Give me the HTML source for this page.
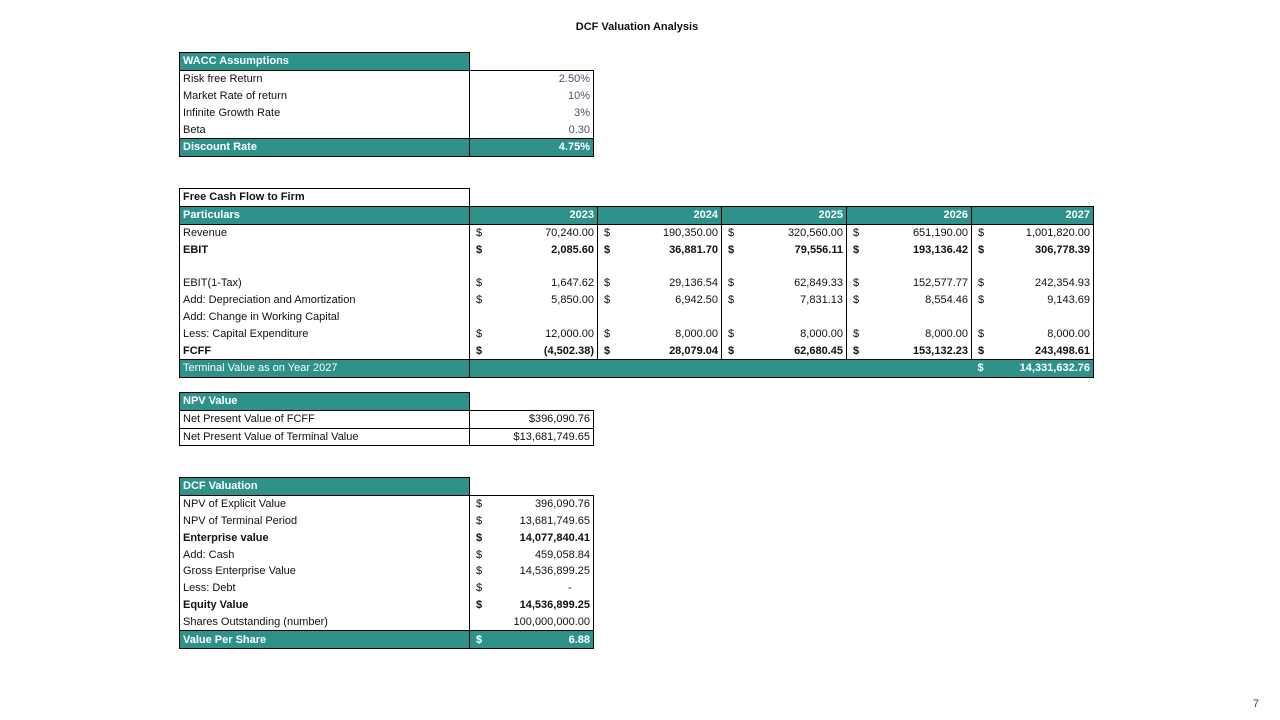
<!DOCTYPE html>
<html><head><meta charset="utf-8"><style>
body{margin:0;width:1280px;height:720px;background:#fff;position:relative;font-family:"Liberation Sans",Arial,sans-serif;font-size:11px;color:#111;overflow:hidden}
table{position:absolute;border-collapse:collapse;table-layout:fixed}
td{height:16.8px;padding:0 3px;white-space:nowrap;line-height:16px;overflow:hidden}
.h{background:#2e918a;color:#fff;font-weight:bold}
.t{background:#2e918a;color:#fff}
.b{font-weight:bold}
.r{text-align:right}
.L{border-left:1px solid #000}.R{border-right:1px solid #000}.T{border-top:1px solid #000}.B{border-bottom:1px solid #000}
.bl{color:#44546a}
.d{display:flex;justify-content:space-between;padding-left:3px}
</style></head><body>
<div style="position:absolute;left:0;width:1274px;top:21px;text-align:center;font-weight:bold;font-size:11px">DCF Valuation Analysis</div>
<div style="position:absolute;right:21px;top:698px;font-size:11px;color:#444">7</div>

<table style="left:179px;top:52px;width:414px">
<col style="width:290px"><col style="width:124px">
<tr><td class="h L R T B">WACC Assumptions</td><td class="B"></td></tr>
<tr><td class="L R">Risk free Return</td><td class="r R bl">2.50%</td></tr>
<tr><td class="L R">Market Rate of return</td><td class="r R bl">10%</td></tr>
<tr><td class="L R">Infinite Growth Rate</td><td class="r R bl">3%</td></tr>
<tr><td class="L R">Beta</td><td class="r R bl">0.30</td></tr>
<tr><td class="h L R T B">Discount Rate</td><td class="h r R T B">4.75%</td></tr>
</table>

<table style="left:179px;top:188px;width:914px">
<col style="width:290px"><col style="width:128px"><col style="width:124px"><col style="width:125px"><col style="width:125px"><col style="width:122px">
<tr><td class="b L R T B">Free Cash Flow to Firm</td><td colspan="5" class="B"></td></tr>
<tr><td class="h L R B">Particulars</td><td class="h r R B">2023</td><td class="h r R B">2024</td><td class="h r R B">2025</td><td class="h r R B">2026</td><td class="h r R B">2027</td></tr>
<tr><td class="L R">Revenue</td><td class="R"><div class="d"><span>$</span><span>70,240.00</span></div></td><td class="R"><div class="d"><span>$</span><span>190,350.00</span></div></td><td class="R"><div class="d"><span>$</span><span>320,560.00</span></div></td><td class="R"><div class="d"><span>$</span><span>651,190.00</span></div></td><td class="R"><div class="d"><span>$</span><span>1,001,820.00</span></div></td></tr>
<tr class="b"><td class="L R">EBIT</td><td class="R"><div class="d"><span>$</span><span>2,085.60</span></div></td><td class="R"><div class="d"><span>$</span><span>36,881.70</span></div></td><td class="R"><div class="d"><span>$</span><span>79,556.11</span></div></td><td class="R"><div class="d"><span>$</span><span>193,136.42</span></div></td><td class="R"><div class="d"><span>$</span><span>306,778.39</span></div></td></tr>
<tr><td class="L R"></td><td class="R"></td><td class="R"></td><td class="R"></td><td class="R"></td><td class="R"></td></tr>
<tr><td class="L R">EBIT(1-Tax)</td><td class="R"><div class="d"><span>$</span><span>1,647.62</span></div></td><td class="R"><div class="d"><span>$</span><span>29,136.54</span></div></td><td class="R"><div class="d"><span>$</span><span>62,849.33</span></div></td><td class="R"><div class="d"><span>$</span><span>152,577.77</span></div></td><td class="R"><div class="d"><span>$</span><span>242,354.93</span></div></td></tr>
<tr><td class="L R">Add: Depreciation and Amortization</td><td class="R"><div class="d"><span>$</span><span>5,850.00</span></div></td><td class="R"><div class="d"><span>$</span><span>6,942.50</span></div></td><td class="R"><div class="d"><span>$</span><span>7,831.13</span></div></td><td class="R"><div class="d"><span>$</span><span>8,554.46</span></div></td><td class="R"><div class="d"><span>$</span><span>9,143.69</span></div></td></tr>
<tr><td class="L R">Add: Change in Working Capital</td><td class="R"></td><td class="R"></td><td class="R"></td><td class="R"></td><td class="R"></td></tr>
<tr><td class="L R">Less: Capital Expenditure</td><td class="R"><div class="d"><span>$</span><span>12,000.00</span></div></td><td class="R"><div class="d"><span>$</span><span>8,000.00</span></div></td><td class="R"><div class="d"><span>$</span><span>8,000.00</span></div></td><td class="R"><div class="d"><span>$</span><span>8,000.00</span></div></td><td class="R"><div class="d"><span>$</span><span>8,000.00</span></div></td></tr>
<tr class="b"><td class="L R">FCFF</td><td class="R"><div class="d"><span>$</span><span>(4,502.38)</span></div></td><td class="R"><div class="d"><span>$</span><span>28,079.04</span></div></td><td class="R"><div class="d"><span>$</span><span>62,680.45</span></div></td><td class="R"><div class="d"><span>$</span><span>153,132.23</span></div></td><td class="R"><div class="d"><span>$</span><span>243,498.61</span></div></td></tr>
<tr><td class="t L R T B">Terminal Value as on Year 2027</td><td colspan="4" class="t T B"></td><td class="h R T B"><div class="d"><span>$</span><span>14,331,632.76</span></div></td></tr>
</table>

<table style="left:179px;top:392px;width:414px">
<col style="width:290px"><col style="width:124px">
<tr><td class="h L R T B">NPV Value</td><td class="B"></td></tr>
<tr><td class="L R B">Net Present Value of FCFF</td><td class="r R B">$396,090.76</td></tr>
<tr><td class="L R B">Net Present Value of Terminal Value</td><td class="r R B">$13,681,749.65</td></tr>
</table>

<table style="left:179px;top:477px;width:414px">
<col style="width:290px"><col style="width:124px">
<tr><td class="h L R T B">DCF Valuation</td><td class="B"></td></tr>
<tr><td class="L R">NPV of Explicit Value</td><td class="R"><div class="d"><span>$</span><span>396,090.76</span></div></td></tr>
<tr><td class="L R">NPV of Terminal Period</td><td class="R"><div class="d"><span>$</span><span>13,681,749.65</span></div></td></tr>
<tr class="b"><td class="L R">Enterprise value</td><td class="R"><div class="d"><span>$</span><span>14,077,840.41</span></div></td></tr>
<tr><td class="L R">Add: Cash</td><td class="R"><div class="d"><span>$</span><span>459,058.84</span></div></td></tr>
<tr><td class="L R">Gross Enterprise Value</td><td class="R"><div class="d"><span>$</span><span>14,536,899.25</span></div></td></tr>
<tr><td class="L R">Less: Debt</td><td class="R"><div class="d"><span>$</span><span>-&nbsp;&nbsp;&nbsp;&nbsp;&nbsp;&nbsp;</span></div></td></tr>
<tr class="b"><td class="L R">Equity Value</td><td class="R"><div class="d"><span>$</span><span>14,536,899.25</span></div></td></tr>
<tr><td class="L R">Shares Outstanding (number)</td><td class="r R">100,000,000.00</td></tr>
<tr><td class="h L R T B">Value Per Share</td><td class="h R T B"><div class="d"><span>$</span><span>6.88</span></div></td></tr>
</table>
</body></html>
